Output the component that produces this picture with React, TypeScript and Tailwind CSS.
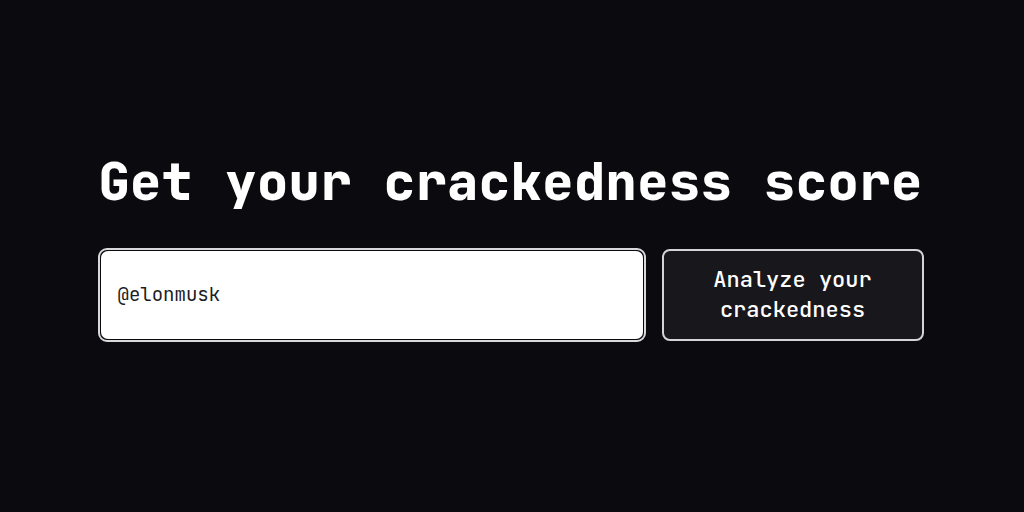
const mono = "font-['JetBrains_Mono','DejaVu_Sans_Mono','Liberation_Mono',monospace]";

export default function App() {
  return (
    <div className={`h-[512px] bg-[#0b0a0e] flex items-center justify-center pb-[20px] pr-[3px] ${mono}`}>
      <div className="w-[826px] flex flex-col items-center">
        <h1 className="text-[52px] leading-[60px] font-extrabold text-white tracking-[0.5px] mb-[38px] translate-y-[2px]">
          Get your crackedness score
        </h1>
        <div className="w-full flex items-stretch gap-[16px]">
          <div className="flex-1 h-[94px] rounded-[9px] border-2 border-[#d9d9dc] p-px bg-[#0b0a0e]">
            <div className="h-full rounded-[7px] bg-white flex items-center px-[17px]">
              <span className="text-[19px] text-[#1c1c1f]">@elonmusk</span>
            </div>
          </div>
          <button className="w-[262px] h-[92px] self-center rounded-[8px] border-2 border-[#d4d4d8] bg-[#18171c] text-white text-[22px] leading-[30px] font-medium">
            Analyze your
            <br />
            crackedness
          </button>
        </div>
      </div>
    </div>
  );
}
